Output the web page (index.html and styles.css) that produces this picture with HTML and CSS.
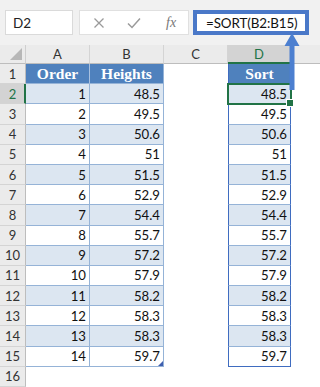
FILE: index.html
```html
<!DOCTYPE html>
<html>
<head>
<meta charset="utf-8">
<link rel="stylesheet" href="styles.css">
</head>
<body>
<div class="app">
  <div class="topbar">
    <div class="namebox">D2</div>
    <div class="btnbox">
      <svg class="ico" width="12" height="12" viewBox="0 0 12 12"><path d="M1.5 1.5 L10.5 10.5 M10.5 1.5 L1.5 10.5" stroke="#9a9a9a" stroke-width="1.3" fill="none"/></svg>
      <svg class="ico" width="14" height="12" viewBox="0 0 14 12"><path d="M1 6.5 L5 10.5 L13 1.5" stroke="#9a9a9a" stroke-width="1.5" fill="none"/></svg>
      <span class="fx">fx</span>
    </div>
    <div class="formula">=SORT(B2:B15)</div>
  </div>
  <div class="sheet">
    <div class="corner"><svg width="12" height="12" viewBox="0 0 12 12"><path d="M12 0 L12 12 L0 12 Z" fill="#b7b7b7"/></svg></div>
    <div class="ch">A</div><div class="ch">B</div><div class="ch">C</div><div class="ch sel">D</div><div class="ch last"></div>

    <div class="rh">1</div><div class="c hdr">Order</div><div class="c hdr b">Heights</div><div class="e"></div><div class="c hdr d">Sort</div><div class="e"></div>
    <div class="rh sel">2</div><div class="c alt">1</div><div class="c alt b">48.5</div><div class="e"></div><div class="c alt d active">48.5</div><div class="e"></div>
    <div class="rh">3</div><div class="c">2</div><div class="c b">49.5</div><div class="e"></div><div class="c d">49.5</div><div class="e"></div>
    <div class="rh">4</div><div class="c alt">3</div><div class="c alt b">50.6</div><div class="e"></div><div class="c alt d">50.6</div><div class="e"></div>
    <div class="rh">5</div><div class="c">4</div><div class="c b">51</div><div class="e"></div><div class="c d">51</div><div class="e"></div>
    <div class="rh">6</div><div class="c alt">5</div><div class="c alt b">51.5</div><div class="e"></div><div class="c alt d">51.5</div><div class="e"></div>
    <div class="rh">7</div><div class="c">6</div><div class="c b">52.9</div><div class="e"></div><div class="c d">52.9</div><div class="e"></div>
    <div class="rh">8</div><div class="c alt">7</div><div class="c alt b">54.4</div><div class="e"></div><div class="c alt d">54.4</div><div class="e"></div>
    <div class="rh">9</div><div class="c">8</div><div class="c b">55.7</div><div class="e"></div><div class="c d">55.7</div><div class="e"></div>
    <div class="rh">10</div><div class="c alt">9</div><div class="c alt b">57.2</div><div class="e"></div><div class="c alt d">57.2</div><div class="e"></div>
    <div class="rh">11</div><div class="c">10</div><div class="c b">57.9</div><div class="e"></div><div class="c d">57.9</div><div class="e"></div>
    <div class="rh">12</div><div class="c alt">11</div><div class="c alt b">58.2</div><div class="e"></div><div class="c alt d">58.2</div><div class="e"></div>
    <div class="rh">13</div><div class="c">12</div><div class="c b">58.3</div><div class="e"></div><div class="c d">58.3</div><div class="e"></div>
    <div class="rh">14</div><div class="c alt">13</div><div class="c alt b">58.3</div><div class="e"></div><div class="c alt d">58.3</div><div class="e"></div>
    <div class="rh">15</div><div class="c">14</div><div class="c b corner-handle">59.7</div><div class="e"></div><div class="c d lastd">59.7</div><div class="e"></div>
    <div class="rh">16</div><div class="e"></div><div class="e"></div><div class="e"></div><div class="e"></div><div class="e"></div>
  </div>
  <svg class="arrow" width="18" height="58" viewBox="0 0 18 58"><path d="M9 0 L16.5 13 L11.5 13 L11.5 57 L6.5 57 L6.5 13 L1.5 13 Z" fill="#4c7fd0"/></svg>
</div>
</body>
</html>
```

FILE: styles.css
```css
* { box-sizing: border-box; }
html, body { margin: 0; padding: 0; background: #fff; }
body { width: 320px; height: 387px; overflow: hidden; font-family: Lato, "Liberation Sans", sans-serif; }
.app { position: relative; width: 320px; height: 387px; overflow: hidden; }

.topbar {
  height: 45px;
  background: #f1f1f1;
  display: flex;
  align-items: flex-start;
  padding: 10px 0 0 5px;
  gap: 6px;
}
.namebox {
  width: 68px; height: 25px;
  background: #fff;
  border: 1px solid #dadada;
  font-size: 13.5px;
  color: #222;
  padding: 4px 0 0 7px;
}
.btnbox {
  width: 110px; height: 25px;
  background: #fff;
  border: 1px solid #e0e0e0;
  display: flex;
  align-items: center;
  padding-left: 13px;
  gap: 22px;
}
.fx { font-family: "Liberation Serif", serif; font-style: italic; color: #777; font-size: 14px; margin-left: 3px; }
.formula {
  margin-left: -2px;
  width: 116px; height: 25px;
  background: #fff;
  border: 4px solid #4a78c8;
  font-size: 13.4px;
  color: #111;
  padding: 1px 0 0 9px;
  letter-spacing: -0.1px;
  white-space: nowrap;
}

.sheet {
  display: grid;
  grid-template-columns: 26px 64px 74px 64px 63px 1fr;
  grid-template-rows: 19px repeat(16, 20.2px);
}
.corner {
  background: #ebebeb;
  border-right: 1px solid #cfcfcf;
  border-bottom: 1px solid #bdbdbd;
  display: flex; align-items: flex-end; justify-content: flex-end;
  padding: 0 3px 3px 0;
}
.ch {
  background: #ebebeb;
  border-right: 1px solid #d4d4d4;
  border-bottom: 1px solid #bdbdbd;
  font-size: 13px;
  color: #333;
  display: flex; align-items: center; justify-content: center;
}
.ch.sel { background: #d3d3d3; border-bottom: 2px solid #217346; color: #217346; }
.ch.last { border-right: none; }

.rh {
  background: #ebebeb;
  border-right: 1px solid #bdbdbd;
  border-bottom: 1px solid #d4d4d4;
  font-size: 13px;
  color: #333;
  display: flex; align-items: center; justify-content: center;
}
.rh.sel { background: #d3d3d3; border-right: 2px solid #217346; color: #217346; padding-left: 1px; }

.e { background: #fff; }

.c {
  background: #fff;
  border-bottom: 1px solid #95b3d7;
  border-right: 1px solid #95b3d7;
  font-size: 13.2px;
  color: #111;
  display: flex; align-items: center; justify-content: flex-end;
  padding-right: 3px;
}
.c.alt { background: #dce6f1; }
.c.hdr {
  background: #4f81bd;
  color: #fff;
  font-family: "Liberation Serif", serif;
  font-weight: bold;
  font-size: 15.5px;
  justify-content: center;
  padding-right: 0;
  border-right-color: #a9c1e0;
}
.c.b { border-right-color: #95b3d7; }
.c.hdr.b { border-right-color: #95b3d7; }
.c.d { border-left: 1px solid #3f6cc0; border-right: 1px solid #3f6cc0; }
.c.d.lastd { border-bottom: 1px solid #3f6cc0; }
.c.active { position: relative; outline: 2px solid #217346; outline-offset: -1px; }
.c.active::after {
  content: "";
  position: absolute;
  right: -4px; bottom: -4px;
  width: 6px; height: 6px;
  background: #217346;
  border: 1px solid #fff;
}
.corner-handle { position: relative; }
.corner-handle::after {
  content: "";
  position: absolute;
  right: 0; bottom: 0;
  width: 0; height: 0;
  border-left: 5px solid transparent;
  border-bottom: 5px solid #3f5faf;
}
.arrow { position: absolute; left: 283px; top: 33px; }
```
